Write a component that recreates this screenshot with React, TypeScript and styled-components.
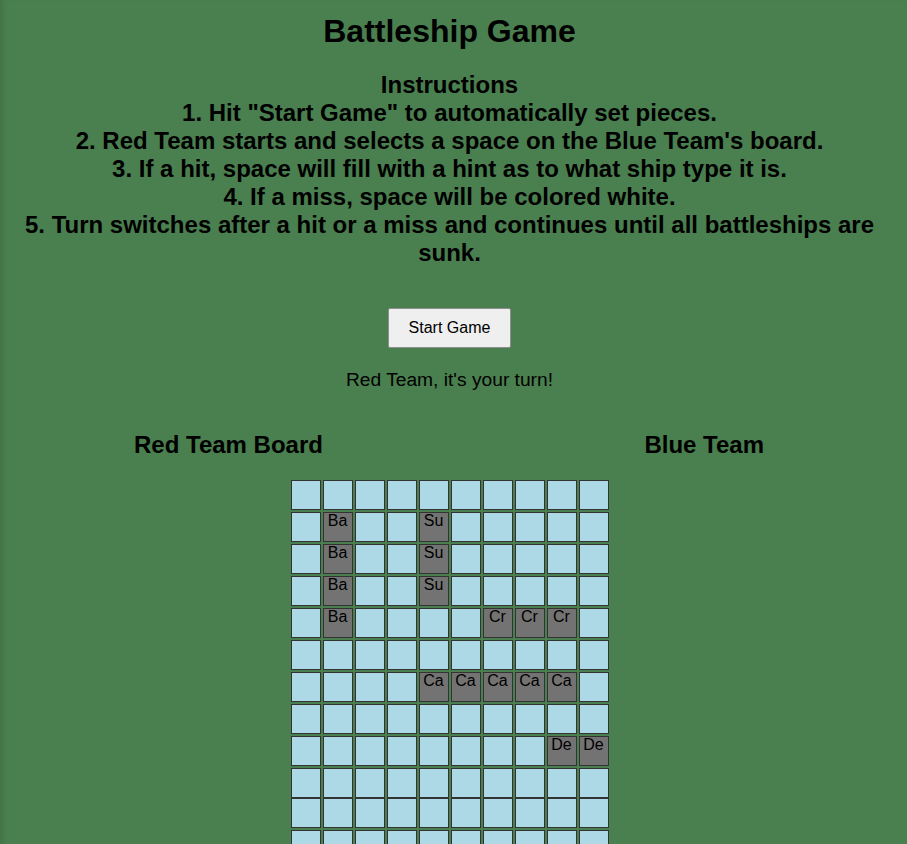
import { createGlobalStyle } from "styled-components";
import styled from "styled-components";

const GlobalStyle = createGlobalStyle`
  html, body {
    margin: 0;
    padding: 0;
    background-color: #4a7f4f;
  }
  body {
    font-family: "Liberation Sans", Arial, sans-serif;
    color: #000;
  }
`;

const Page = styled.div`
  display: flex;
  flex-direction: column;
  align-items: center;
  min-height: 844px;
  padding: 13px 12px 0 4px;
  box-sizing: border-box;
  box-shadow: inset 6px 0 6px -4px rgba(0, 0, 0, 0.12);
`;

const Title = styled.h1`
  font-size: 32px;
  font-weight: 700;
  margin: 0 0 21px;
  line-height: 37px;
`;

const Instructions = styled.div`
  font-size: 24px;
  font-weight: 700;
  line-height: 28px;
  text-align: center;
  margin-bottom: 41px;
`;

const StartButton = styled.button`
  font-family: "Liberation Sans", Arial, sans-serif;
  font-size: 16px;
  padding: 10px 20px;
  background-color: #efefef;
  border: 1px solid #8f8f8f;
  border-radius: 2px;
  color: #000;
  cursor: pointer;
  line-height: 18px;
`;

const TurnText = styled.p`
  font-size: 19.2px;
  margin: 21px 0 40px;
  line-height: 22px;
`;

const BoardHeadings = styled.div`
  display: flex;
  justify-content: space-between;
  align-self: stretch;
  padding: 0 131px 0 130px;
  margin-bottom: 21px;
`;

const BoardHeading = styled.h2`
  font-size: 24px;
  font-weight: 700;
  margin: 0;
  line-height: 28px;
`;

const Boards = styled.div`
  display: flex;
  flex-direction: column;
`;

const Board = styled.div`
  display: grid;
  grid-template-columns: repeat(10, 30px);
  grid-auto-rows: 30px;
  gap: 2px;
`;

const Cell = styled.div<{ $ship?: boolean }>`
  box-sizing: border-box;
  border: 1px solid #333;
  background-color: ${(p) => (p.$ship ? "#737373" : "#add8e6")};
  font-size: 16px;
  line-height: 15px;
  text-align: center;
  color: #000;
`;

const redShips: Record<string, string> = {
  "1-1": "Ba",
  "2-1": "Ba",
  "3-1": "Ba",
  "4-1": "Ba",
  "1-4": "Su",
  "2-4": "Su",
  "3-4": "Su",
  "4-6": "Cr",
  "4-7": "Cr",
  "4-8": "Cr",
  "6-4": "Ca",
  "6-5": "Ca",
  "6-6": "Ca",
  "6-7": "Ca",
  "6-8": "Ca",
  "8-8": "De",
  "8-9": "De",
};

const renderBoard = (ships: Record<string, string>) => {
  const cells = [];
  for (let r = 0; r < 10; r++) {
    for (let c = 0; c < 10; c++) {
      const ship = ships[`${r}-${c}`];
      cells.push(
        <Cell key={`${r}-${c}`} $ship={!!ship}>
          {ship}
        </Cell>
      );
    }
  }
  return cells;
};

const App = () => {
  return (
    <>
      <GlobalStyle />
      <Page>
        <Title>Battleship Game</Title>
        <Instructions>
          Instructions
          <br />
          1. Hit "Start Game" to automatically set pieces.
          <br />
          2. Red Team starts and selects a space on the Blue Team's board.
          <br />
          3. If a hit, space will fill with a hint as to what ship type it is.
          <br />
          4. If a miss, space will be colored white.
          <br />
          5. Turn switches after a hit or a miss and continues until all
          battleships are sunk.
        </Instructions>
        <StartButton>Start Game</StartButton>
        <TurnText>Red Team, it's your turn!</TurnText>
        <BoardHeadings>
          <BoardHeading>Red Team Board</BoardHeading>
          <BoardHeading>Blue Team</BoardHeading>
        </BoardHeadings>
        <Boards>
          <Board>{renderBoard(redShips)}</Board>
          <Board>{renderBoard({})}</Board>
        </Boards>
      </Page>
    </>
  );
};

export default App;
